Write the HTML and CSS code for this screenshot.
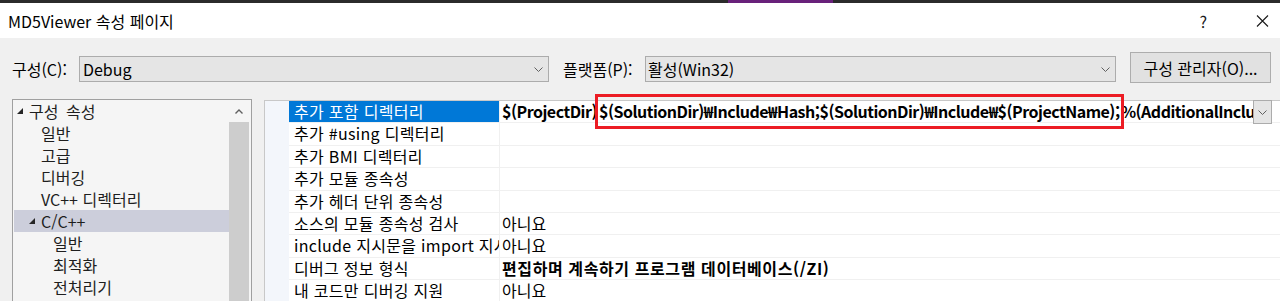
FILE: index.html
```html
<!DOCTYPE html>
<html lang="ko">
<head>
  <meta charset="UTF-8" />
  <meta name="viewport" content="width=device-width, initial-scale=1.0" />
  <title>MD5Viewer 속성 페이지</title>
  <link rel="stylesheet" href="styles.css">
</head>
<body>
  <div class="strip"><span class="strip-app"></span></div>

  <header class="titlebar">
    <span class="title">MD5Viewer 속성 페이지</span>
    <div class="title-buttons">
      <span class="help">?</span>
      <svg class="close" viewBox="0 0 13 12">
        <path d="M1 0.5L12 11.5M12 0.5L1 11.5" />
      </svg>
    </div>
  </header>

  <div class="toolbar">
    <span class="field-label cfg-label">구성(C):</span>
    <div class="combo cfg-combo">
      <span>Debug</span>
      <svg class="chevron" viewBox="0 0 9 5"><path d="M0.5 0.5L4.5 4.5L8.5 0.5" /></svg>
    </div>
    <span class="field-label plat-label">플랫폼(P):</span>
    <div class="combo plat-combo">
      <span>활성(Win32)</span>
      <svg class="chevron" viewBox="0 0 9 5"><path d="M0.5 0.5L4.5 4.5L8.5 0.5" /></svg>
    </div>
    <button class="btn">구성 관리자(O)...</button>
  </div>

  <div class="main">
    <div class="tree">
      <ul class="tree-list">
        <li class="tree-item lvl0"><span class="twisty"><svg viewBox="0 0 6 6"><polygon points="6,0 6,6 0,6" /></svg></span>구성 속성</li>
        <li class="tree-item lvl1"><span class="twisty"></span>일반</li>
        <li class="tree-item lvl1"><span class="twisty"></span>고급</li>
        <li class="tree-item lvl1"><span class="twisty"></span>디버깅</li>
        <li class="tree-item lvl1"><span class="twisty"></span>VC++ 디렉터리</li>
        <li class="tree-item lvl1 current"><span class="twisty"><svg viewBox="0 0 6 6"><polygon points="6,0 6,6 0,6" /></svg></span>C/C++</li>
        <li class="tree-item lvl2"><span class="twisty"></span>일반</li>
        <li class="tree-item lvl2"><span class="twisty"></span>최적화</li>
        <li class="tree-item lvl2"><span class="twisty"></span>전처리기</li>
      </ul>
      <div class="scrollbar">
        <div class="scroll-up">
          <svg viewBox="0 0 8 5"><path d="M0.5 4.5L4 1L7.5 4.5" /></svg>
        </div>
        <div class="scroll-thumb"></div>
      </div>
    </div>

    <div class="grid">
      <div class="grid-margin"></div>
      <div class="grid-rows">
        <div class="row selected">
          <div class="name">추가 포함 디렉터리</div>
          <div class="value bold has-drop">
            <span class="value-text">$(ProjectDir)<span class="mark">$(SolutionDir)₩Include₩Hash;$(SolutionDir)₩Include₩$(ProjectName);</span>%(AdditionalIncludeDirectories)</span>
            <span class="drop"><svg class="chevron" viewBox="0 0 9 5"><path d="M0.5 0.5L4.5 4.5L8.5 0.5" /></svg></span>
          </div>
        </div>
        <div class="row"><div class="name">추가 #using 디렉터리</div><div class="value"></div></div>
        <div class="row"><div class="name">추가 BMI 디렉터리</div><div class="value"></div></div>
        <div class="row"><div class="name">추가 모듈 종속성</div><div class="value"></div></div>
        <div class="row"><div class="name">추가 헤더 단위 종속성</div><div class="value"></div></div>
        <div class="row"><div class="name">소스의 모듈 종속성 검사</div><div class="value">아니요</div></div>
        <div class="row"><div class="name">include 지시문을 import 지시문으로 변환</div><div class="value">아니요</div></div>
        <div class="row"><div class="name">디버그 정보 형식</div><div class="value bold">편집하며 계속하기 프로그램 데이터베이스(/ZI)</div></div>
        <div class="row"><div class="name">내 코드만 디버깅 지원</div><div class="value">아니요</div></div>
      </div>
    </div>
  </div>
</body>
</html>
```

FILE: styles.css
```css
*, *::before, *::after {
  box-sizing: border-box;
  margin: 0;
  padding: 0;
}

body {
  font-family: "Noto Sans CJK KR", sans-serif;
  font-size: 16px;
  color: #000;
  background-color: #f0f0f0;
  height: 301px;
  overflow: hidden;
}

svg {
  display: block;
}

/* window chrome */

.strip {
  display: flex;
  height: 3px;
  background-color: #2b2b2b;
}

.strip-app {
  margin-left: 728px;
  width: 105px;
  background-color: #68217a;
}

.titlebar {
  display: flex;
  align-items: center;
  justify-content: space-between;
  height: 35px;
  padding-left: 8px;
  background-color: #fff;
}

.title-buttons {
  display: flex;
  align-items: center;
  gap: 49px;
  padding-right: 11px;
}

.help {
  color: #1a1a1a;
}

.close {
  width: 13px;
  height: 12px;
  fill: none;
  stroke: #1a1a1a;
  stroke-width: 1.1;
}

/* configuration bar */

.toolbar {
  display: flex;
  align-items: flex-start;
  height: 61px;
  padding: 14px 9px 0 12px;
}

.field-label {
  margin-top: 4px;
  height: 26px;
  line-height: 26px;
  white-space: nowrap;
}

.cfg-label {
  width: 67px;
}

.plat-label {
  width: 82px;
  margin-left: 14px;
}

.combo {
  display: flex;
  align-items: center;
  justify-content: space-between;
  margin-top: 4px;
  width: 470px;
  height: 26px;
  padding: 0 5px 0 3px;
  background-color: #e5e5e5;
  border: 1px solid #acacac;
}

.plat-combo {
  width: 471px;
  padding-left: 2px;
}

.chevron {
  width: 9px;
  height: 5px;
  fill: none;
  stroke: #606060;
  stroke-width: 1;
}

.btn {
  margin-left: 14px;
  width: 141px;
  height: 31px;
  font: inherit;
  color: #000;
  background-color: #e1e1e1;
  border: 1px solid #adadad;
}

/* tree + property grid */

.main {
  display: flex;
  gap: 12px;
  height: 202px;
  padding-left: 12px;
}

.tree {
  display: flex;
  flex-shrink: 0;
  width: 240px;
  background-color: #f5f5f5;
  border: 1px solid #a0a0a0;
  border-bottom: none;
}

.tree-list {
  flex: 1;
  list-style: none;
}

.tree-item {
  display: flex;
  align-items: center;
  height: 22px;
  color: #1e1e1e;
  white-space: nowrap;
}

.tree-item.lvl0 { padding-left: 4px; word-spacing: 3px; }
.tree-item.lvl1 { padding-left: 16px; }
.tree-item.lvl2 { padding-left: 28px; }

.tree-item.current {
  margin-left: 1px;
  padding-left: 15px;
  background-color: #cccedb;
}

.twisty {
  width: 12px;
  flex-shrink: 0;
}

.twisty svg {
  width: 6px;
  height: 6px;
  fill: #262626;
}

.scrollbar {
  display: flex;
  flex-direction: column;
  width: 22px;
  padding-right: 2px;
}

.scroll-up {
  display: flex;
  align-items: center;
  justify-content: center;
  height: 22px;
}

.scroll-up svg {
  width: 8px;
  height: 5px;
  fill: none;
  stroke: #606060;
  stroke-width: 1.4;
}

.scroll-thumb {
  flex: 1;
  background-color: #cdcdcd;
}

.grid {
  flex: 1;
  min-width: 0;
  display: flex;
  margin-top: 1px;
  background-color: #fff;
  border-top: 1px solid #c8c8c8;
  border-left: 1px solid #c8c8c8;
}

.grid-margin {
  width: 24px;
  flex-shrink: 0;
  background-color: #f3f6fb;
}

.grid-rows {
  flex: 1;
  min-width: 0;
}

.row {
  display: flex;
  height: 22.4px;
  line-height: 21.4px;
  border-bottom: 1px solid #f0f0f0;
}

.name {
  width: 211px;
  flex-shrink: 0;
  padding-left: 5px;
  border-right: 1px solid #f0f0f0;
  white-space: nowrap;
  overflow: hidden;
  letter-spacing: 0.3px;
}

.selected .name {
  color: #fff;
  background-color: #0078d7;
}

.value {
  flex: 1;
  min-width: 0;
  padding-left: 2px;
  white-space: nowrap;
}

.bold {
  font-weight: 700;
  letter-spacing: 0.6px;
}

.has-drop {
  display: flex;
  padding-right: 8px;
}

.value-text {
  flex: 1;
  min-width: 0;
  overflow-x: clip;
  letter-spacing: -0.5px;
}

.mark {
  margin-left: 1px;
  padding: 2px 1px 3px;
  outline: 3px solid #ec1c24;
}

.drop {
  display: flex;
  align-items: center;
  justify-content: center;
  flex-shrink: 0;
  width: 19px;
  height: 24px;
  margin-top: -1px;
  background-color: #e5e5e5;
  border: 1px solid #acacac;
}
```
